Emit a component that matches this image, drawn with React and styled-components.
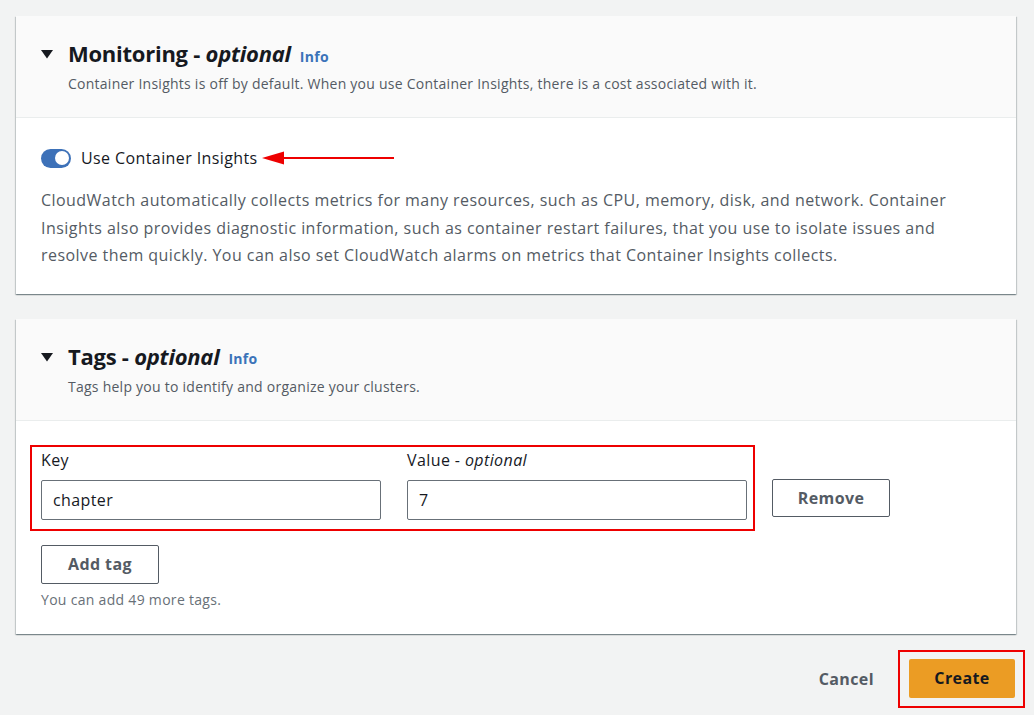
import React, { useState } from "react";
import styled, { createGlobalStyle } from "styled-components";

const GlobalStyle = createGlobalStyle`
  html, body {
    margin: 0;
    padding: 0;
    background: #f2f3f3;
  }
  body {
    font-family: "Open Sans", "Noto Sans", Arial, sans-serif;
    color: #16191f;
    letter-spacing: 0.4px;
  }
  * {
    box-sizing: border-box;
  }
`;

export default function App() {
  const [insights, setInsights] = useState(true);
  const [key, setKey] = useState("chapter");
  const [value, setValue] = useState("7");

  return (
    <Page>
      <GlobalStyle />
      <Panel>
        <Header>
          <TitleRow>
            <Caret />
            <Title>
              Monitoring - <em>optional</em>
            </Title>
            <Info href="#">Info</Info>
          </TitleRow>
          <Subtitle>
            Container Insights is off by default. When you use Container Insights, there is a
            cost associated with it.
          </Subtitle>
        </Header>
        <Body $top={28} $bottom={24}>
          <ToggleRow>
            <Toggle $on={insights} onClick={() => setInsights(!insights)}>
              <Knob $on={insights} />
            </Toggle>
            <ToggleLabel>Use Container Insights</ToggleLabel>
            <Arrow />
          </ToggleRow>
          <Paragraph>
            CloudWatch automatically collects metrics for many resources, such as CPU, memory,
            disk, and network. Container Insights also provides diagnostic information, such as
            container restart failures, that you use to isolate issues and resolve them
            quickly. You can also set CloudWatch alarms on metrics that Container Insights
            collects.
          </Paragraph>
        </Body>
      </Panel>

      <Panel>
        <Header>
          <TitleRow>
            <Caret />
            <Title>
              Tags - <em>optional</em>
            </Title>
            <Info href="#">Info</Info>
          </TitleRow>
          <Subtitle>Tags help you to identify and organize your clusters.</Subtitle>
        </Header>
        <Body $top={24} $bottom={24}>
          <TagRow>
            <Highlight>
              <Field>
                <Label>Key</Label>
                <Input value={key} onChange={(e) => setKey(e.target.value)} />
              </Field>
              <Field>
                <Label>
                  Value - <em>optional</em>
                </Label>
                <Input value={value} onChange={(e) => setValue(e.target.value)} />
              </Field>
            </Highlight>
            <RemoveButton>Remove</RemoveButton>
          </TagRow>
          <AddButton>Add tag</AddButton>
          <Hint>You can add 49 more tags.</Hint>
        </Body>
      </Panel>

      <Footer>
        <LinkButton>Cancel</LinkButton>
        <CreateFrame>
          <PrimaryButton>Create</PrimaryButton>
        </CreateFrame>
      </Footer>
    </Page>
  );
}

const Caret = () => (
  <CaretIcon width="12" height="9" viewBox="0 0 12 9">
    <path d="M0 0 L12 0 L6 8.5 Z" fill="#16191f" />
  </CaretIcon>
);

const Arrow = () => (
  <ArrowIcon width="134" height="16" viewBox="0 0 134 16">
    <path d="M0 8 L22 1.5 L22 14.5 Z" fill="#ee0000" />
    <line x1="20" y1="8" x2="132" y2="8" stroke="#ee0000" strokeWidth="2" />
  </ArrowIcon>
);

const Page = styled.div`
  padding: 16px 18px 7px 16px;
  display: flex;
  flex-direction: column;
  gap: 25px;
`;

const Panel = styled.section`
  background: #ffffff;
  box-shadow: 0 1px 1px 0 rgba(0, 28, 36, 0.3), 1px 1px 1px 0 rgba(0, 28, 36, 0.15),
    -1px 1px 1px 0 rgba(0, 28, 36, 0.15);
`;

const Header = styled.header`
  background: #fafafa;
  border-bottom: 1px solid #eaeded;
  padding: 23px 25px 24px;
  height: 102px;
`;

const TitleRow = styled.div`
  display: flex;
  align-items: center;
  height: 29px;
`;

const CaretIcon = styled.svg`
  flex: none;
  margin-right: 15px;
  margin-top: 2px;
`;

const Title = styled.h2`
  margin: 0;
  font-size: 22px;
  font-weight: 700;
  line-height: 29px;
  letter-spacing: -0.25px;
  color: #16191f;

  em {
    font-style: italic;
  }
`;

const Info = styled.a`
  margin-left: 9px;
  margin-top: 5px;
  font-size: 14px;
  font-weight: 700;
  letter-spacing: 0.3px;
  color: #3b73b9;
  text-decoration: none;
`;

const Subtitle = styled.p`
  margin: 6px 0 0 27px;
  font-size: 14px;
  line-height: 20px;
  letter-spacing: 0.25px;
  color: #545b64;
`;

const Body = styled.div`
  padding: ${(p) => p.$top}px 25px ${(p) => p.$bottom}px;
`;

const ToggleRow = styled.div`
  display: flex;
  align-items: center;
  height: 24px;
`;

const Toggle = styled.button`
  position: relative;
  width: 30px;
  height: 19px;
  border: none;
  border-radius: 10px;
  padding: 0;
  background: ${(p) => (p.$on ? "#3d71b8" : "#aab7b8")};
  cursor: pointer;
  flex: none;
`;

const Knob = styled.span`
  position: absolute;
  top: 2.5px;
  left: ${(p) => (p.$on ? "13.5px" : "2.5px")};
  width: 14px;
  height: 14px;
  border-radius: 50%;
  background: #ffffff;
`;

const ToggleLabel = styled.span`
  margin-left: 10px;
  font-size: 16px;
  line-height: 24px;
  color: #16191f;
`;

const ArrowIcon = styled.svg`
  margin-left: 4px;
  flex: none;
`;

const Paragraph = styled.p`
  margin: 17px 0 0;
  max-width: 940px;
  font-size: 16px;
  line-height: 27.5px;
  letter-spacing: 0.45px;
  color: #545b64;
`;

const TagRow = styled.div`
  display: flex;
  align-items: flex-start;
  gap: 17px;
`;

const Highlight = styled.div`
  display: flex;
  gap: 26px;
  border: 2px solid #ee0000;
  margin-left: -11px;
  padding: 2px 6px 9px 9px;
`;

const Field = styled.div`
  display: flex;
  flex-direction: column;
  gap: 8px;
`;

const Label = styled.label`
  font-size: 16px;
  line-height: 23px;
  color: #16191f;

  em {
    font-style: italic;
  }
`;

const Input = styled.input`
  width: 340px;
  height: 40px;
  border: 1px solid #687078;
  border-radius: 2px;
  padding: 0 11px;
  font-family: inherit;
  font-size: 16px;
  letter-spacing: 0.4px;
  color: #16191f;
  background: #ffffff;
  outline: none;
`;

const OutlineButton = styled.button`
  width: 118px;
  border: 1px solid #545b64;
  border-radius: 2px;
  background: #ffffff;
  font-family: inherit;
  font-size: 16px;
  font-weight: 700;
  letter-spacing: 0.4px;
  color: #545b64;
  cursor: pointer;
`;

const RemoveButton = styled(OutlineButton)`
  height: 38px;
  margin-top: 34px;
`;

const AddButton = styled(OutlineButton)`
  height: 39px;
  margin-top: 14px;
  display: block;
`;

const Hint = styled.div`
  margin-top: 6px;
  font-size: 14px;
  line-height: 20px;
  letter-spacing: 0.3px;
  color: #687078;
`;

const Footer = styled.footer`
  display: flex;
  justify-content: flex-end;
  align-items: center;
  gap: 16px;
  margin-top: -9px;
  margin-right: -9px;
`;

const LinkButton = styled.button`
  border: none;
  background: none;
  padding: 0 8px;
  font-family: inherit;
  font-size: 16px;
  font-weight: 700;
  letter-spacing: 0.4px;
  color: #545b64;
  cursor: pointer;
`;

const CreateFrame = styled.div`
  border: 2px solid #ee0000;
  padding: 7px 8px 8px 9px;
`;

const PrimaryButton = styled.button`
  display: block;
  width: 106px;
  height: 39px;
  border: none;
  border-radius: 2px;
  background: #eb9c24;
  font-family: inherit;
  font-size: 16px;
  font-weight: 700;
  letter-spacing: 0.4px;
  color: #16191f;
  cursor: pointer;
`;
